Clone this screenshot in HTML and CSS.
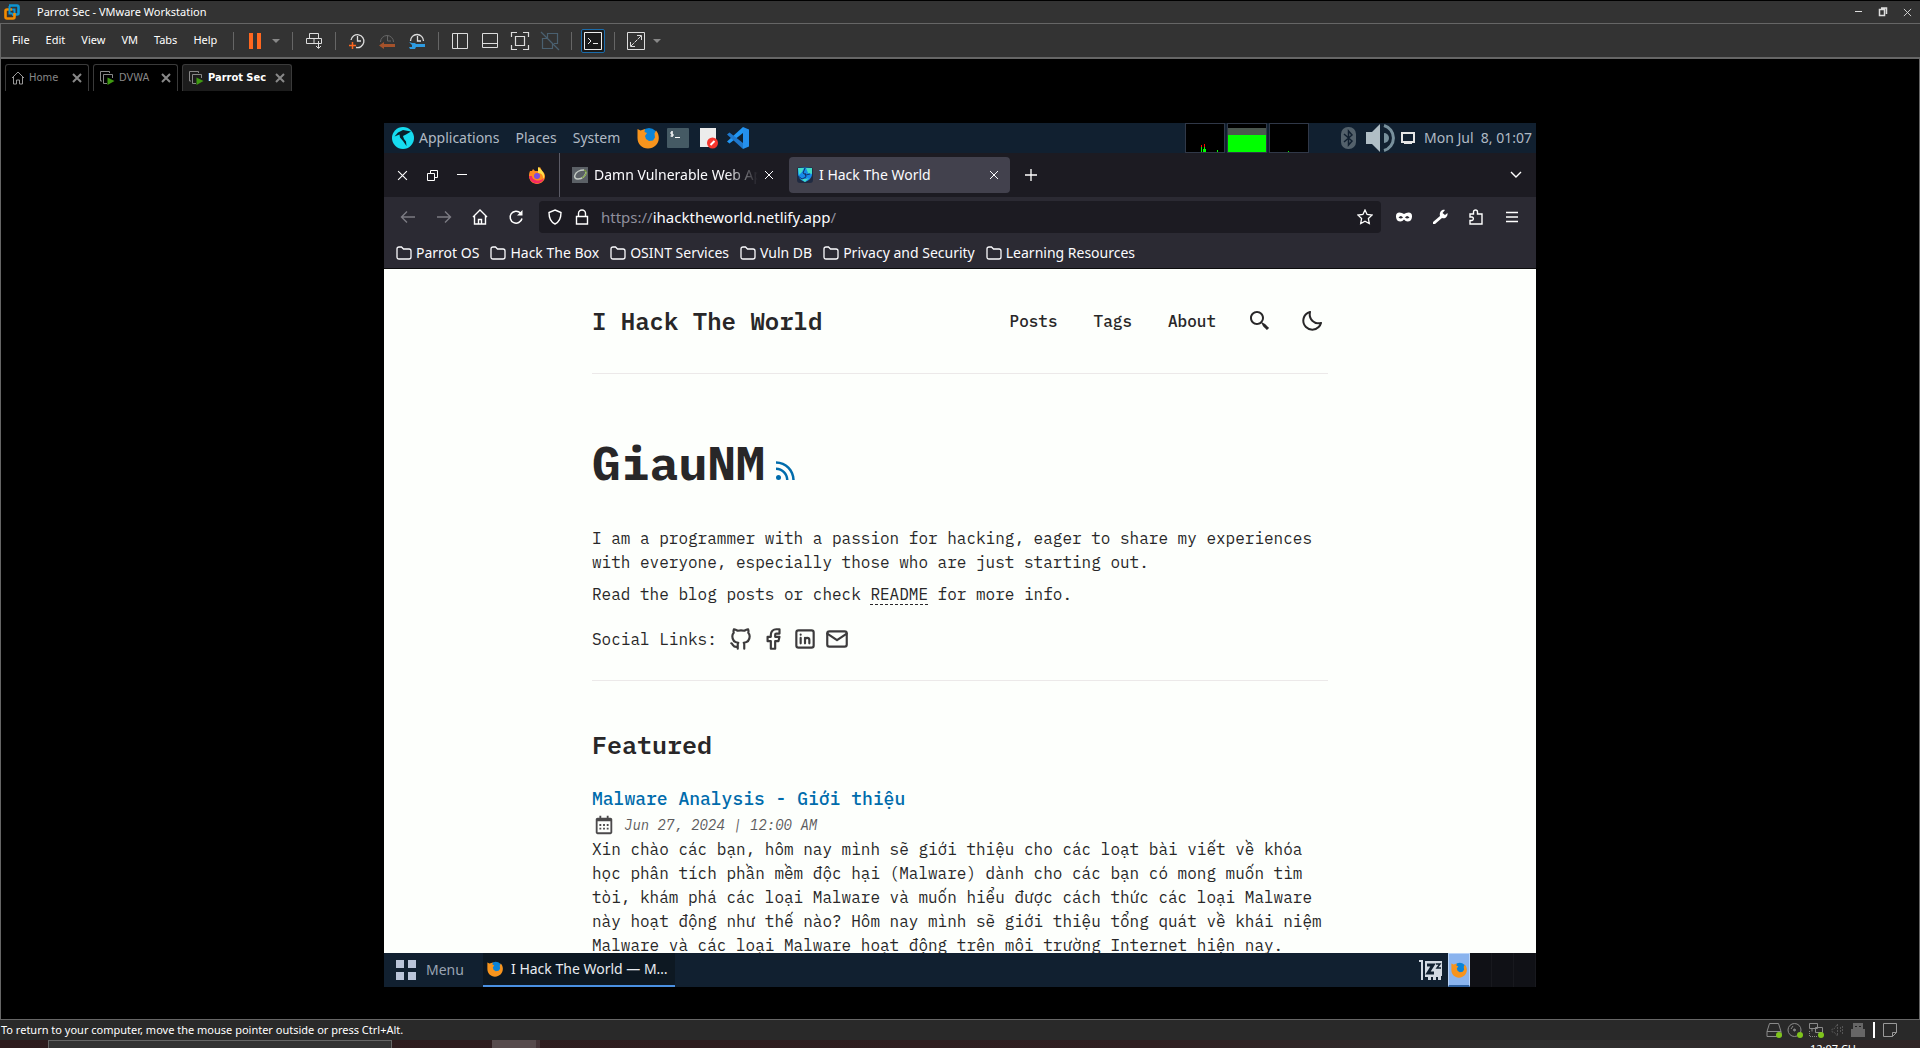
FILE: index.html
```html
<!DOCTYPE html>
<html lang="en">
<head>
<meta charset="utf-8">
<title>Parrot Sec - VMware Workstation</title>
<link rel="stylesheet" href="styles.css">
</head>
<body>
<svg class="defs" aria-hidden="true">
  <symbol id="folder" viewBox="0 0 16 14"><path d="M1 11V3q0-2 2-2h2.500l2 2H13q2 0 2 2v6q0 2-2 2H3q-2 0-2-2Z" fill="none" stroke="currentColor" stroke-width="1.300"/></symbol>
  <symbol id="close" viewBox="0 0 10 10"><path d="M1 1l8 8M9 1l-8 8" fill="none" stroke="currentColor"/></symbol>
  <symbol id="vm" viewBox="0 0 16 16"><path d="M3 11H1.500V1.500h9V3M8 13.500H4.500v-9h9V8" fill="none" stroke="#888"/><path d="M8.500 7.500l7 3.500-7 4Z" fill="#3f9a12"/></symbol>
  <symbol id="oldfox" viewBox="0 0 22 22"><circle cx="12" cy="10" r="9" fill="#0a84d8"/><path d="M.5 2l3 1.500L8 2l-.5 3 2.500 1-2 3 1 3 3 2 4-.5 2-3-.5-4 1.500-3c2 2 2.800 5 2.800 7.500C21.800 17 17 21.500 11 21.500 5 21.500.5 17 .5 11Z" fill="#f7941d"/><path d="M10 8l3 1 1 3-2 1-2-2Z" fill="#0a84d8"/></symbol>
  <symbol id="caret" viewBox="0 0 10 6"><path d="M1 1h8L5 5Z" fill="#888"/></symbol>
</svg>
<div class="host">
  <header class="titlebar">
    <svg width="16" height="16" viewBox="0 0 16 16"><path d="M5 1.500h8q1.500 0 1.500 1.500v6q0 1.500-1.500 1.500H8" fill="none" stroke="#0c95d3" stroke-width="2.600"/><path d="M8 5.500H3q-1.500 0-1.500 1.500v6q0 1.500 1.500 1.500h6q1.500 0 1.500-1.500V9" fill="none" stroke="#f38b00" stroke-width="2.600"/><path d="M5.500 2v7.500h3M10.500 9V5.500H8" fill="none" stroke="#0c95d3" stroke-width="2"/></svg>
    <h1 class="titlebar-text">Parrot Sec - VMware Workstation</h1>
    <div class="window-buttons">
      <button aria-label="Minimize"><svg width="10" height="10"><path d="M1 4.500h7" stroke="#ddd"/></svg></button>
      <button aria-label="Restore"><svg width="10" height="10"><path d="M1.500 2.500h5v6h-5ZM3 1h5.500v6" fill="none" stroke="#ddd" stroke-width="1.500"/></svg></button>
      <button class="window-close" aria-label="Close"><svg width="9" height="9"><use href="#close"/></svg></button>
    </div>
  </header>
  <div class="toolbar">
    <nav class="menu">
      <button>File</button><button>Edit</button><button>View</button><button>VM</button><button>Tabs</button><button>Help</button>
    </nav>
    <span class="sep"></span>
    <button aria-label="Pause"><svg width="20" height="20"><path d="M4 2h4v16H4zM12 2h4v16h-4z" fill="#ff671f"/></svg></button>
    <button class="drop" aria-label="Power options"><svg width="10" height="6"><use href="#caret"/></svg></button>
    <span class="sep"></span>
    <button aria-label="Send keys"><svg width="20" height="20" fill="none" stroke="#ddd"><path d="M5.500 2.500h9v5h-9zM2.500 7.500h15v5h-15zM10 7.500v5M14.500 10v7M12 15l2.500 2.500L17 15"/></svg></button>
    <span class="sep"></span>
    <div class="tools">
      <button aria-label="Take snapshot"><svg width="20" height="20" fill="none"><path d="M4 9a6.500 6.500 0 1 1 5 7.500M10.500 5v5H14" stroke="#ddd" stroke-width="1.300"/><path d="M2 14.500h7M5.500 11v7" stroke="#ff671f" stroke-width="1.500"/></svg></button>
      <button aria-label="Revert snapshot"><svg width="20" height="20" fill="none"><path d="M3.500 11a6.500 6.500 0 1 1 13 0M10.500 5v5H14" stroke="#666"/><path d="M2 14.500l5-3.500v2h11v3H7v2Z" fill="#a5522b"/></svg></button>
      <button aria-label="Manage snapshots"><svg width="20" height="20" fill="none"><path d="M3.500 10a6.500 6.500 0 1 1 13 0M10.500 5v5H14" stroke="#ddd" stroke-width="1.300"/><path d="M2 11l3 1h3l1 1h9v3H9l-1 2H3l-1-2h3v-2Z" fill="#2e9be0"/></svg></button>
    </div>
    <span class="sep"></span>
    <div class="tools">
      <button aria-label="Library"><svg width="20" height="20" fill="none" stroke="#ddd"><path d="M2.500 2.500h15v15h-15zM7.500 2.500v15"/></svg></button>
      <button aria-label="Thumbnail bar"><svg width="20" height="20" fill="none" stroke="#ddd"><path d="M2.500 2.500h15v14h-15zM2.500 12.500h15"/></svg></button>
      <button aria-label="Full screen"><svg width="20" height="20" fill="none" stroke="#ddd"><path d="M5.500 5.500h9v9h-9zM1.500 6V1.500H7M13 1.500h5.500V6M1.500 14v4.500H7M13 18.500h5.500V14" stroke-width="1.200"/></svg></button>
      <button aria-label="Unity" disabled><svg width="20" height="20" fill="none" stroke="#4a6070"><path d="M7.500 7V2.500h10v10H14M12.500 12v5.500h-10v-10H7M1 1l18 18" stroke-width="1.200"/></svg></button>
    </div>
    <span class="sep"></span>
    <button class="console" aria-label="Console view"><svg width="20" height="20" fill="none" stroke="#eee"><path d="M1.500 1.500h17v17h-17zM5 7l3 3-3 3M10 12.500h5"/></svg></button>
    <span class="sep"></span>
    <button aria-label="Stretch"><svg width="20" height="20" fill="none" stroke="#ddd"><path d="M1.500 1.500h17v17h-17zM11 4.500h4.500V9M4.500 11v4.500H9"/><path d="M5 15L15 5" stroke-dasharray="4 1"/></svg></button>
    <button class="drop" aria-label="Stretch options"><svg width="10" height="6"><use href="#caret"/></svg></button>
  </div>
  <main class="stage">
    <div class="host-tabs">
      <div class="host-tab home"><svg width="14" height="14" fill="none" stroke="#999"><path d="M1 7l6-6 6 6M2.500 6v7h3V9h3v4h3V6"/></svg><span>Home</span><button aria-label="Close Home"><svg width="10" height="10"><use href="#close"/></svg></button></div>
      <div class="host-tab dvwa"><svg width="16" height="16"><use href="#vm"/></svg><span>DVWA</span><button aria-label="Close DVWA"><svg width="10" height="10"><use href="#close"/></svg></button></div>
      <div class="host-tab parrot"><svg width="16" height="16"><use href="#vm"/></svg><span>Parrot Sec</span><button aria-label="Close Parrot Sec"><svg width="10" height="10"><use href="#close"/></svg></button></div>
    </div>
    <section class="guest">
      <div class="panel">
        <svg width="22" height="22"><circle cx="11" cy="11" r="11" fill="#16dcf0"/><path d="M2.500 9.500L6 5.500 11 3l8 1.500-5 3-3 1.500 1 3 2 2.500.5 4.500-3.500-5-3-3.500-.5-3Z" fill="#08202b"/></svg>
        <nav class="panel-menu"><button>Applications</button><button>Places</button><button>System</button></nav>
        <div class="launchers">
          <button aria-label="Firefox"><svg width="22" height="22"><use href="#oldfox"/></svg></button>
          <button aria-label="Terminal"><svg width="22" height="20"><rect width="22" height="20" rx="1" fill="#455a64"/><path d="M6 4H4v2h2v2H3.500M5 3v6M8 9.500h5" fill="none" stroke="#fff"/></svg></button>
          <button class="note" aria-label="Text editor"><svg width="18" height="22"><path d="M0 1h16v19H0z" fill="#ececec"/><circle cx="12.500" cy="16" r="5.500" fill="#f5352d"/><path d="M10.500 18l4-4" stroke="#fff" stroke-width="2"/></svg></button>
          <button aria-label="VS Code"><svg width="22" height="22"><path d="M0 14.500L16 0v6L2.500 16.500Z" fill="#2196f3"/><path d="M0 7.500l2.500-2L16 16v6Z" fill="#1f78cc"/><path d="M16 0l6 2.500v17L16 22Z" fill="#2490ee"/></svg></button>
        </div>
        <div class="graphs">
          <svg width="40" height="30"><rect x=".5" y=".5" width="39" height="29" stroke="#303848"/><path d="M16.500 22v7M19.500 21v8" stroke="#f00"/><path d="M16.500 24v5M18.500 26v3M19.500 24v5M20.500 26v3M32.500 27v2" stroke="#0f0"/></svg>
          <svg width="40" height="30"><rect x=".5" y=".5" width="39" height="29" stroke="#303848"/><path d="M1 5h38v7H1z" fill="#4b574f"/><path d="M1 12h38v17H1z" fill="#0f0"/></svg>
          <svg width="40" height="30"><rect x=".5" y=".5" width="39" height="29" stroke="#303848"/><path d="M19 28.500h1" stroke="#0f0"/></svg>
        </div>
        <svg class="bt" width="15" height="22"><rect width="15" height="22" rx="7" fill="#53616b"/><path d="M3 7l8 7-3.500 4V4L11 8l-8 7" fill="none" stroke="#112030" stroke-width="1.500"/></svg>
        <svg class="vol" width="29" height="28"><path d="M0 8h6l8-8v28l-8-8H0Z" fill="#b0bec5"/><path d="M18 9a5 5 0 0 1 0 10Z" fill="#78909c"/><path d="M18 1.500a13 13 0 0 1 0 25" fill="none" stroke="#78909c" stroke-width="3"/></svg>
        <svg width="14" height="14"><path d="M1 2h12v9H1z" fill="none" stroke="#e5e5e5" stroke-width="2"/><path d="M3 12.500h8" stroke="#e5e5e5"/></svg>
        <time class="clock">Mon Jul&nbsp; 8, 01:07</time>
      </div>
      <div class="tabstrip">
        <div class="ff-window">
          <button aria-label="Close window"><svg width="11" height="11"><use href="#close"/></svg></button>
          <button aria-label="Restore window"><svg width="11" height="11" fill="none" stroke="#fff"><path d="M.5 3.500h7v7h-7zM3.500 3V.5h7v7H8"/></svg></button>
          <button aria-label="Minimize window"><svg width="10" height="10"><path d="M0 4.500h10" stroke="#fff"/></svg></button>
        </div>
        <div class="pinned"><svg width="16" height="17" viewBox="0 0 16 17"><path d="M1 4l2 0 1-2 2 2 4 0-1-3 2-1 2 4 2 2c3 5-1 11-7 11S-2 11 1 4Z" fill="#ff8a1f"/><path d="M9 0c5 4 8 7 5 13 1-6-3-7-5-7Z" fill="#ffe14a"/><path d="M0 9c1 9 13 10 15 2-3 4-12 3-12-2Z" fill="#f52a62"/><circle cx="8" cy="9" r="3" fill="#7b4fe0"/></svg></div>
        <div class="tab">
          <svg width="16" height="16"><rect width="16" height="16" fill="#5b6066"/><path d="M14 5c0 4-4 7-8 7-3 0-4-2-3-4 1-3 5-5 9-5" fill="none" stroke="#c5ccc5" stroke-width="1.500"/><path d="M12 3c4 1 2 6-2 8" fill="none" stroke="#7ba33c" stroke-width="1.200"/></svg>
          <span class="tab-title fade">Damn Vulnerable Web App</span>
          <button aria-label="Close tab"><svg width="10" height="10"><use href="#close"/></svg></button>
        </div>
        <div class="tab active">
          <svg width="16" height="16"><rect width="16" height="16" rx="3" fill="#202b42"/><path d="M1 1q7-1 14 0v7q-1 5-7 7-6-2-7-7Z" fill="#168be8"/><path d="M1 1h6L5 5 2 8ZM9 1h6v6l-4-1ZM4 12l5 0 3-1-4 4Z" fill="#43dcc6"/><path d="M8 1l-2 5 3 2 4-1M1 9l4 3 4-2-1-4" fill="none" stroke="#123369"/></svg>
          <span class="tab-title">I Hack The World</span>
          <button aria-label="Close tab"><svg width="10" height="10"><use href="#close"/></svg></button>
        </div>
        <button class="new-tab" aria-label="New tab"><svg width="12" height="12"><path d="M0 6h12M6 0v12" stroke="#fff" stroke-width="1.300"/></svg></button>
        <button class="all-tabs" aria-label="List all tabs"><svg width="12" height="8"><path d="M1 1l5 5 5-5" fill="none" stroke="#fff" stroke-width="1.400"/></svg></button>
      </div>
      <div class="navbar">
        <div class="nav-group">
          <button aria-label="Back" disabled><svg width="16" height="16" fill="none" stroke="#7c7b83" stroke-width="1.400"><path d="M15 8H2M7 2.500L1.500 8 7 13.500"/></svg></button>
          <button aria-label="Forward" disabled><svg width="16" height="16" fill="none" stroke="#7c7b83" stroke-width="1.400"><path d="M1 8h13M9 2.500L14.500 8 9 13.500"/></svg></button>
          <button aria-label="Home"><svg width="16" height="16" fill="none" stroke="#fff" stroke-width="1.400"><path d="M1 8l7-7 7 7M2.500 7v8h11V7M6.500 15v-4.500h3V15"/></svg></button>
          <button aria-label="Reload"><svg width="16" height="16" fill="none" stroke="#fff" stroke-width="1.500"><path d="M14 9.500A6 6 0 1 1 12.500 4"/><path d="M14.500 1v5.500H9Z" fill="#fff" stroke="none"/></svg></button>
        </div>
        <div class="urlbar">
          <svg width="16" height="16" fill="none" stroke="#fff" stroke-width="1.400"><path d="M8 1l6 2.500c0 6-1.500 9.500-6 11.500C3.500 13 2 9.500 2 3.500Z"/></svg>
          <svg width="14" height="16" fill="none" stroke="#fff" stroke-width="1.400"><path d="M1.500 7.500h11v7.500h-11zM3.500 7V4.500a3.500 3.500 0 0 1 7 0V7"/></svg>
          <a class="url" href="https://ihacktheworld.netlify.app/">https://<b>ihacktheworld.netlify.app</b>/</a>
          <button class="star" aria-label="Bookmark"><svg width="16" height="16" fill="none" stroke="#fff" stroke-width="1.300"><path d="M8 1l2.100 4.500 4.900.6-3.600 3.400.9 5L8 12.200l-4.300 2.300.9-5L1 6.100l4.900-.6Z"/></svg></button>
        </div>
        <div class="nav-group">
          <button aria-label="Private mask"><svg width="16" height="16"><path fill-rule="evenodd" d="M0 7q0-3.500 3.500-3.500Q6 3.500 8 5q2-1.500 4.500-1.500Q16 3.500 16 7v1q-.5 4.500-4.500 4.500-2 0-3.500-2-1.500 2-3.500 2Q.5 12.500 0 8ZM2.500 8.500q2.500 2 4.500 0-2-3-4.500 0M9 8.500q2 2 4.500 0-2.500-3-4.500 0" fill="#fff"/></svg></button>
          <button aria-label="Tools"><svg width="16" height="16"><path d="M1 13L8 7C7 3 10 0 13 1l-2.500 3L13 6l2.500-2C16 8 13 10 10 9l-7 6-2 0Z" fill="#fff"/></svg></button>
          <button aria-label="Extensions"><svg width="16" height="16" fill="none" stroke="#fff" stroke-width="1.400"><path d="M2 5h3.500V3a2 2 0 0 1 4 0v2H14v10H2v-3.500h2a1.800 1.800 0 0 0 0-3.500H2Z"/></svg></button>
          <button aria-label="Menu"><svg width="16" height="16"><path d="M2 3.500h12M2 8h12M2 12.500h12" stroke="#fff" stroke-width="1.300"/></svg></button>
        </div>
      </div>
      <div class="bookmarks">
        <a href="#"><svg width="16" height="14"><use href="#folder"/></svg>Parrot OS</a>
        <a href="#"><svg width="16" height="14"><use href="#folder"/></svg>Hack The Box</a>
        <a href="#"><svg width="16" height="14"><use href="#folder"/></svg>OSINT Services</a>
        <a href="#"><svg width="16" height="14"><use href="#folder"/></svg>Vuln DB</a>
        <a href="#"><svg width="16" height="14"><use href="#folder"/></svg>Privacy and Security</a>
        <a href="#"><svg width="16" height="14"><use href="#folder"/></svg>Learning Resources</a>
      </div>
      <div class="page">
        <div class="column">
          <header class="blog-header">
            <a class="brand" href="#">I Hack The World</a>
            <nav class="blog-nav">
              <a href="#">Posts</a><a href="#">Tags</a><a href="#">About</a>
              <button aria-label="Search"><svg width="24" height="24"><path d="M19.023 16.977a35.130 35.130 0 0 1-1.367-1.384c-.372-.378-.596-.653-.596-.653l-2.800-1.337A6.962 6.962 0 0 0 16 9c0-3.859-3.140-7-7-7S2 5.141 2 9s3.140 7 7 7c1.763 0 3.370-.66 4.603-1.739l1.337 2.800s.275.224.653.596c.387.363.896.854 1.384 1.367l1.358 1.392.604.646 2.121-2.121-.646-.604c-.379-.372-.885-.866-1.391-1.360zM9 14c-2.757 0-5-2.243-5-5s2.243-5 5-5 5 2.243 5 5-2.243 5-5 5z"/></svg></button>
              <button aria-label="Dark mode"><svg width="24" height="24"><path d="M20.742 13.045a8.088 8.088 0 0 1-2.077.271c-2.135 0-4.140-.83-5.646-2.336a8.025 8.025 0 0 1-2.064-7.723A1 1 0 0 0 9.730 2.034a10.014 10.014 0 0 0-4.489 2.582c-3.898 3.898-3.898 10.243 0 14.143a9.937 9.937 0 0 0 7.072 2.930 9.930 9.930 0 0 0 7.070-2.929 10.007 10.007 0 0 0 2.583-4.491 1.001 1.001 0 0 0-1.224-1.224zm-2.772 4.301a7.947 7.947 0 0 1-5.656 2.343 7.953 7.953 0 0 1-5.658-2.344c-3.118-3.119-3.118-8.195 0-11.314a7.923 7.923 0 0 1 2.060-1.483 10.027 10.027 0 0 0 2.890 7.848 9.972 9.972 0 0 0 7.848 2.891 8.036 8.036 0 0 1-1.484 2.059z"/></svg></button>
            </nav>
          </header>
          <section class="hero">
            <div class="hero-title"><h2>GiauNM</h2><a href="#" aria-label="RSS feed"><svg width="30" height="30" viewBox="0 0 24 24" fill="#006cac"><path d="M19 20.001C19 11.729 12.271 5 4 5v2c7.168 0 13 5.832 13 13.001h2z"/><path d="M12 20.001h2C14 14.486 9.514 10 4 10v2c4.411 0 8 3.589 8 8.001z"/><circle cx="6" cy="18" r="2"/></svg></a></div>
            <p>I am a programmer with a passion for hacking, eager to share my experiences with everyone, especially those who are just starting out.</p>
            <p>Read the blog posts or check <a class="readme" href="#">README</a> for more info.</p>
            <div class="social">
              <span>Social Links:</span>
              <div class="social-icons">
                <a href="#" aria-label="GitHub"><svg width="26" height="26" viewBox="0 0 24 24"><path d="M9 19c-4.300 1.400-4.300-2.500-6-3m12 5v-3.500c0-1 .1-1.400-.5-2 2.800-.3 5.500-1.400 5.500-6a4.600 4.600 0 0 0-1.300-3.200 4.200 4.200 0 0 0-.1-3.200s-1.100-.3-3.500 1.300a12.300 12.300 0 0 0-6.200 0C6.500 2.800 5.400 3.100 5.400 3.100a4.200 4.200 0 0 0-.1 3.200A4.600 4.600 0 0 0 4 9.500c0 4.600 2.700 5.700 5.500 6-.6.6-.6 1.200-.5 2V21"/></svg></a>
                <a href="#" aria-label="Facebook"><svg width="26" height="26" viewBox="0 0 24 24"><path d="M7 10v4h3v7h4v-7h3l1-4h-4V8a1 1 0 0 1 1-1h3V3h-3a5 5 0 0 0-5 5v2H7"/></svg></a>
                <a href="#" aria-label="LinkedIn"><svg width="26" height="26" viewBox="0 0 24 24"><rect x="4" y="4" width="16" height="16" rx="2"/><path d="M8 11v5M8 8v.01M12 16v-5M16 16v-3a2 2 0 0 0-4 0"/></svg></a>
                <a href="#" aria-label="Mail"><svg width="26" height="26" viewBox="0 0 24 24"><rect x="3" y="5" width="18" height="14" rx="2"/><path d="M3 7l9 6 9-6"/></svg></a>
              </div>
            </div>
          </section>
          <section class="featured">
            <h3>Featured</h3>
            <article>
              <a class="post-link" href="#">Malware Analysis - Giới thiệu</a>
              <div class="date"><svg width="22" height="22" viewBox="0 0 24 24"><path d="M7 11h2v2H7zm0 4h2v2H7zm4-4h2v2h-2zm0 4h2v2h-2zm4-4h2v2h-2zm0 4h2v2h-2z"/><path d="M5 22h14c1.103 0 2-.897 2-2V6c0-1.103-.897-2-2-2h-2V2h-2v2H9V2H7v2H5c-1.103 0-2 .897-2 2v14c0 1.103.897 2 2 2zM19 8l.001 12H5V8h14z"/></svg><time>Jun 27, 2024 | 12:00 AM</time></div>
              <p>Xin chào các bạn, hôm nay mình sẽ giới thiệu cho các loạt bài viết về khóa học phân tích phần mềm độc hại (Malware) dành cho các bạn có mong muốn tìm tòi, khám phá các loại Malware và muốn hiểu được cách thức các loại Malware này hoạt động như thế nào? Hôm nay mình sẽ giới thiệu tổng quát về khái niệm Malware và các loại Malware hoạt động trên môi trường Internet hiện nay.</p>
            </article>
          </section>
        </div>
      </div>
      <footer class="guest-bar">
        <button class="start"><svg width="20" height="20" fill="#bac4d8"><path d="M0 0h8v8H0zM12 0h8v8h-8zM0 12h8v8H0zM12 12h8v8h-8z"/></svg>Menu</button>
        <button class="task"><svg width="16" height="16"><use href="#oldfox"/></svg><span>I Hack The World — M…</span></button>
        <svg class="zz" width="23" height="22"><path d="M0 1h4v20H2V3H0zM6 2h17v15h-1v4h-3v-3h-2v3h-3v-3h-2v3H9v-3H6z" fill="#d3dae3"/><path d="M8 6h6l-5 8h6" fill="none" stroke="#112030" stroke-width="3"/><path d="M17 5h4l-3 4h4" fill="none" stroke="#112030" stroke-width="1.500"/></svg>
        <div class="workspaces"><button class="current" aria-label="Workspace 1"><svg width="16" height="16"><use href="#oldfox"/></svg></button><button aria-label="Workspace 2"></button><button aria-label="Workspace 3"></button><button aria-label="Workspace 4"></button></div>
      </footer>
    </section>
  </main>
  <footer class="status">
    <span class="status-text">To return to your computer, move the mouse pointer outside or press Ctrl+Alt.</span>
    <div class="devices">
      <svg width="16" height="16" fill="none" stroke="#8a8a8a"><path d="M3.500 1.500h9l2.500 8v5H1v-5ZM1 9.500h14"/><circle cx="13" cy="13" r="3" fill="#7ec41c" stroke="none"/></svg>
      <svg width="16" height="16" fill="none" stroke="#8a8a8a"><circle cx="7.500" cy="8" r="6.500"/><circle cx="7.500" cy="8" r="1" fill="#8a8a8a"/><path d="M4 7l2-3"/><circle cx="13" cy="13" r="3" fill="#7ec41c" stroke="none"/></svg>
      <svg width="16" height="16" fill="none" stroke="#8a8a8a"><path d="M1.500 1.500h8v5h-8zM7.500 5.500h7v5h-7zM4 6.500v3"/><path d="M1.500 9v5.500H9" stroke-dasharray="1 1"/><circle cx="13" cy="13" r="3" fill="#7ec41c" stroke="none"/></svg>
      <svg width="16" height="16" fill="none" stroke="#555"><path d="M8.500 2v12L5 10H3V7h2ZM11.500 5v6M13.500 4v8" stroke-dasharray="2 1"/></svg>
      <svg width="16" height="16" fill="#666"><path d="M3 1h10v6h2v8H1V7h2z"/><path d="M5 4h2v1H5zM9 4h2v1H9z" fill="#222"/></svg>
      <span class="status-sep"></span>
      <svg width="16" height="16" fill="none" stroke="#999"><path d="M1.500 1.500h13v9l-4 4h-9ZM14.500 10.500h-4v4"/></svg>
    </div>
  </footer>
  <div class="host-taskbar"><span class="search-box"></span><span class="task-block"></span><span class="host-clock">12:07 CH</span></div>
</div>
</body>
</html>
```
FILE: styles.css
```css
* { box-sizing: border-box; }
body { margin: 0; background: #000; color: #fff; font: 11px/16px "Noto Sans", "Open Sans", sans-serif; }
button { margin: 0; padding: 0; border: 0; background: none; color: inherit; font: inherit; display: flex; align-items: center; justify-content: center; }
a { color: inherit; text-decoration: none; }
svg { display: block; flex: none; }
h1, h2, h3, p { margin: 0; }
.defs { position: absolute; width: 0; height: 0; }

.host { height: 100vh; display: flex; flex-direction: column; overflow: hidden; }
.titlebar { height: 24px; flex: none; display: flex; align-items: center; gap: 17px; padding: 0 1px 0 4px; background: #333; border-top: 1px solid #000; border-bottom: 1px solid #666; }
.titlebar-text { flex: 1; font-size: 11px; font-weight: 400; }
.window-buttons { display: flex; }
.window-buttons button { width: 24px; height: 20px; }
.window-close { color: #ddd; }

.toolbar { height: 35px; flex: none; display: flex; align-items: center; background: #333; border-left: 1px solid #666; border-bottom: 2px solid #666; }
.menu { display: flex; gap: 16px; width: 221px; padding: 0 0 2px 11px; }
.sep { width: 1px; height: 18px; margin: 0 11px; background: #666; }
.drop { margin-left: 6px; }
.tools { display: flex; gap: 10px; }
.console { width: 24px; height: 24px; margin: 0 -2px; background: #1b1b1b; border: 1px solid #1b6cab; border-radius: 2px; }

.stage { flex: 1; min-height: 0; display: flex; flex-direction: column; border: 1px solid #666; border-width: 0 1px; }
.host-tabs { height: 32px; flex: none; display: flex; align-items: flex-end; gap: 4px; padding-left: 4px; font: 11px/16px "DejaVu Sans Condensed", "DejaVu Sans", sans-serif; color: #888; }
.host-tab { height: 27px; display: flex; align-items: center; gap: 4px; padding: 0 6px 0 5px; border: 1px solid #3a3a3a; border-bottom: 0; border-radius: 3px 3px 0 0; }
.host-tab button { margin-left: auto; color: #888; }
.host-tab button svg { stroke-width: 2; }
.home { width: 84px; }
.dvwa { width: 85px; }
.parrot { width: 110px; background: #1c1c1c; color: #fff; font-weight: 700; }

.guest { width: 60vw; aspect-ratio: 4 / 3; margin: auto; display: flex; flex-direction: column; min-height: 0; background: #112030; font: 14px/20px "Noto Sans", sans-serif; }
.panel { height: 30px; flex: none; display: flex; align-items: center; padding: 0 4px 0 8px; color: #b0bac4; }
.panel-menu { display: flex; gap: 16px; margin-left: 5px; }
.launchers { display: flex; align-items: center; gap: 8px; margin-left: 17px; }
.note { margin: 0 1px 0 3px; }
.graphs { display: flex; gap: 2px; margin-left: auto; }
.bt { margin-left: 32px; }
.vol { margin: 0 6px 0 10px; }
.clock { margin-left: 9px; white-space: nowrap; }

.tabstrip { height: 44px; flex: none; display: flex; align-items: center; background: #1c1b22; }
.ff-window { display: flex; padding-left: 3px; }
.ff-window button { width: 30px; height: 30px; }
.pinned { align-self: stretch; width: 83px; display: flex; align-items: center; justify-content: flex-end; padding-right: 14px; border-right: 1px solid #5b5b66; }
.tab { width: 221px; height: 36px; margin-left: 4px; display: flex; align-items: center; gap: 6px; padding: 0 11px 0 8px; border-radius: 4px; color: #fbfbfe; }
.active { background: #42414d; }
.tab-title { flex: 1; min-width: 0; overflow: hidden; white-space: nowrap; }
.fade { -webkit-mask-image: linear-gradient(to left, transparent, #000 32px); mask-image: linear-gradient(to left, transparent, #000 32px); }
.new-tab { width: 42px; height: 36px; }
.all-tabs { width: 40px; height: 36px; margin-left: auto; }

.navbar { height: 40px; flex: none; display: flex; align-items: center; gap: 5px; padding: 0 6px; background: #2b2a33; }
.nav-group { display: flex; }
.nav-group button { width: 36px; height: 32px; }
.urlbar { flex: 1; height: 32px; display: flex; align-items: center; gap: 12px; padding: 0 8px; border-radius: 4px; background: #1c1b22; }
.url { color: #8f8f9d; font-size: 15px; }
.url b { font-weight: 400; color: #fbfbfe; }
.star { margin-left: auto; }
.bookmarks { height: 32px; flex: none; display: flex; align-items: center; gap: 11px; padding: 0 12px; background: #2b2a33; border-bottom: 1px solid #0c0c0d; color: #fbfbfe; }
.bookmarks a { display: flex; align-items: center; gap: 4px; white-space: nowrap; }

.page { flex: 1; min-height: 0; overflow: hidden; background: #fdfffc; color: #282728; font: 16px/24px "IBM Plex Mono", "Liberation Mono", monospace; }
.column { max-width: 768px; margin: 0 auto; padding: 0 16px; }
.blog-header { height: 105px; display: flex; align-items: center; justify-content: space-between; border-bottom: 1px solid #ece9e9; }
.brand { font-size: 24px; font-weight: 600; }
.blog-nav { display: flex; align-items: center; gap: 32px; padding-right: 4px; font-weight: 500; }
.blog-nav a + a { margin-left: 4px; }
.blog-nav button + button { margin-left: -4px; }
.blog-nav svg { fill: #282728; }
.hero { padding: 60px 0 28px; border-bottom: 1px solid #ece9e9; }
.hero-title { display: flex; align-items: center; gap: 6px; margin-bottom: 36px; }
.hero-title h2 { font-size: 48px; line-height: 56px; }
.hero-title a { padding-top: 16px; }
.hero p { margin-bottom: 8px; }
.readme { border-bottom: 1px dashed #282728; }
.social { display: flex; align-items: center; gap: 11px; padding-top: 12px; }
.social-icons { display: flex; gap: 6px; }
.social-icons svg { fill: none; stroke: #3c3b3c; stroke-width: 2; stroke-linecap: round; stroke-linejoin: round; }
.featured { padding-top: 48px; }
.featured h3 { font-size: 25px; line-height: 32px; font-weight: 600; margin-bottom: 24px; }
.post-link { display: block; font-size: 18px; line-height: 28px; font-weight: 500; color: #006cac; }
.date { display: flex; align-items: center; gap: 9px; padding-left: 1px; font-size: 14px; font-style: italic; color: #5c5b5c; }
.date svg { fill: #4b4a4b; }

.guest-bar { height: 34px; flex: none; display: flex; align-items: center; color: #9aa4b3; }
.start { gap: 10px; width: 99px; justify-content: flex-start; padding-left: 12px; }
.task { width: 192px; height: 34px; justify-content: flex-start; gap: 8px; padding: 0 4px; background: #0d1822; border-bottom: 2px solid #4a90e2; color: #e8ebf0; }
.task span { white-space: nowrap; }
.zz { margin-left: auto; margin-right: 6px; }
.workspaces { display: flex; align-self: stretch; }
.workspaces button { width: 22px; background: #101116; border-right: 1px solid #18191e; }
.workspaces .current { background: #8ab4ee; border: 1px solid #b9d4f8; border-width: 1px 1px 2px; border-bottom-color: #2d5f9e; }

.status { height: 21px; flex: none; display: flex; align-items: center; justify-content: space-between; padding: 0 22px 0 1px; background: #292929; border-top: 1px solid #666; }
.devices { display: flex; gap: 5px; }
.status-sep { width: 2px; background: #fff; margin: 0 2px; }
.host-taskbar { height: 8px; flex: none; display: flex; overflow: hidden; background: linear-gradient(to right, #2d1b1d, #302022 60%, #303030 80%, #302526); }
.search-box { width: 344px; margin-left: 48px; background: #333; border: 1px solid #666; border-bottom: 0; }
.task-block { width: 48px; margin-left: 100px; background: #574b4d; border-right: 4px solid #443437; }
.host-clock { margin: 1px 64px 0 auto; }
```
